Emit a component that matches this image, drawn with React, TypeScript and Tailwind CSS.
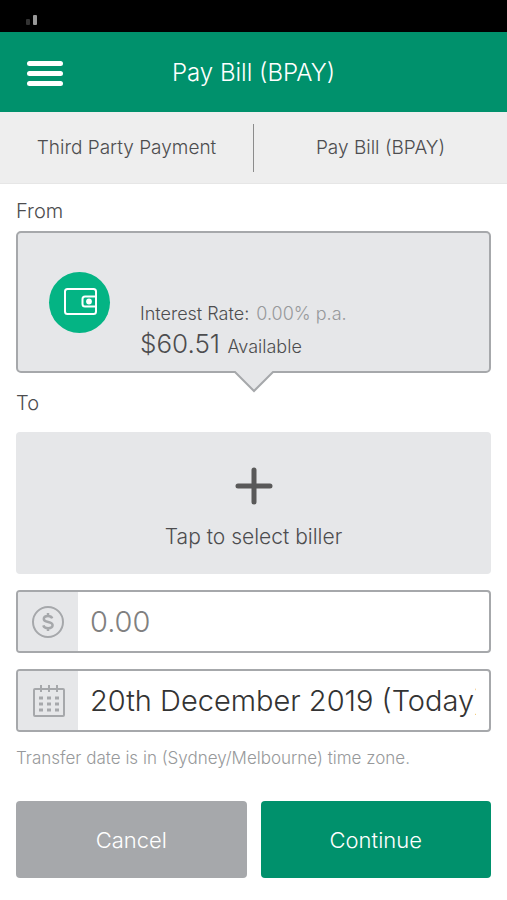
import { useState } from "react";

function WalletIcon() {
  return (
    <svg viewBox="0 0 34 28" className="h-7 w-[34px]" fill="none" stroke="white" strokeWidth="2" aria-hidden="true">
      <rect x="2" y="1" width="31" height="25" rx="2.5" />
      <path d="M33 8.500H22a2.500 2.500 0 0 0-2.500 2.500v5a2.500 2.500 0 0 0 2.500 2.500h11" />
      <circle cx="26" cy="13.500" r="2.900" fill="white" stroke="none" />
    </svg>
  );
}

function DollarIcon() {
  return (
    <svg viewBox="0 0 34 34" className="size-[34px]" fill="none" stroke="#a6a8ab" strokeWidth="2" aria-hidden="true">
      <circle cx="17" cy="17" r="15" />
      <path
        d="M21.200 13.400c-.6-1.700-2.100-2.500-4.200-2.500-2.500 0-4.200 1.200-4.200 3 0 4.300 8.800 1.800 8.800 6.200 0 1.900-1.800 3.200-4.500 3.200-2.400 0-4.200-1-4.800-2.900M17 8v3M17 23v3"
        strokeWidth="2.500"
      />
    </svg>
  );
}

function CalendarIcon() {
  return (
    <svg viewBox="0 0 34 34" className="size-[34px]" fill="none" stroke="#a6a8ab" strokeWidth="2" aria-hidden="true">
      <rect x="3" y="5" width="30" height="27" rx="1" />
      <path d="M10 1v7M18 1v7M26 1v7" />
      <path d="M8 14h4M16 14h4M24 14h4M8 20h4M16 20h4M24 20h4M8 26h4M16 26h4M24 26h4" strokeWidth="3" />
    </svg>
  );
}

function PlusIcon() {
  return (
    <svg viewBox="0 0 38 38" className="size-[38px]" stroke="#595959" strokeWidth="5" strokeLinecap="round" aria-hidden="true">
      <path d="M19 3v32M3 19h32" />
    </svg>
  );
}

export default function App() {
  const [amount, setAmount] = useState("");
  const [date, setDate] = useState("20th December 2019 (Today)");

  return (
    <div className="min-h-screen bg-white font-['Inter','Liberation_Sans',sans-serif] font-light text-[#4d4d4f]">
      <div className="flex h-8 items-center bg-black px-[26px]">
        <div className="flex items-end gap-[3px] pt-2">
          <span className="h-1.5 w-1 rounded-[1px] bg-[#333]" />
          <span className="h-2.5 w-1 rounded-[1px] bg-[#999]" />
        </div>
      </div>

      <header className="grid h-20 grid-cols-[1fr_auto_1fr] items-center bg-[#00916c] px-[27px] pt-0.5">
        <button type="button" aria-label="Menu" className="flex w-9 flex-col gap-[5px]">
          <span className="h-[5px] rounded-full bg-white" />
          <span className="h-[5px] rounded-full bg-white" />
          <span className="h-[5px] rounded-full bg-white" />
        </button>
        <h1 className="text-[24px] leading-8 text-white">Pay Bill (BPAY)</h1>
      </header>

      <nav className="flex h-[72px] items-center border-b border-[#e6e6e6] bg-[#eee] text-[19px] leading-7">
        <button type="button" className="h-12 flex-1 border-r border-[#8c8c8c]">Third Party Payment</button>
        <button type="button" className="h-12 flex-1">Pay Bill (BPAY)</button>
      </nav>

      <main className="px-4 pt-[13px] pb-5">
        <h2 className="text-[20px] leading-7">From</h2>
        <section className="relative mt-1.5 flex h-[142px] items-center rounded-[5px] border-2 border-[#a6a8ab] bg-[#e6e7e9] px-[31px]">
          <div className="flex size-[61px] shrink-0 items-center justify-center rounded-full bg-[#04b484]">
            <WalletIcon />
          </div>
          <div className="ml-[30px] pt-[62px]">
            <p className="text-[18px] leading-6">
              Interest Rate: <span className="ml-0.5 text-[#97999b]">0.00% p.a.</span>
            </p>
            <p className="text-[26px] leading-9">
              $60.51 <span className="text-[18px]">Available</span>
            </p>
          </div>
          <svg viewBox="0 0 42 22" className="absolute top-full left-1/2 h-[22px] w-[42px] -translate-x-1/2" aria-hidden="true">
            <path d="M1 0 21 20 41 0" fill="#e6e7e9" stroke="#a6a8ab" strokeWidth="2" />
          </svg>
        </section>

        <h2 className="mt-4 text-[20px] leading-7">To</h2>
        <button type="button" className="mt-[15px] flex h-[142px] w-full flex-col items-center justify-center gap-[18px] rounded-[4px] bg-[#e6e7e9] pt-3 text-[21px] leading-7">
          <PlusIcon />
          Tap to select biller
        </button>

        <div className="mt-4 flex h-[63px] overflow-hidden rounded-[4px] border-2 border-[#a6a8ab]">
          <label htmlFor="amount" aria-label="Amount" className="flex w-[60px] shrink-0 items-center justify-center bg-[#e6e7e9]">
            <DollarIcon />
          </label>
          <input
            id="amount"
            value={amount}
            onChange={(e) => setAmount(e.target.value)}
            placeholder="0.00"
            className="mr-[13px] min-w-0 flex-1 pl-3 text-[29px] text-[#333] outline-none placeholder:text-[#808080]"
          />
        </div>
        <div className="mt-4 flex h-[63px] overflow-hidden rounded-[4px] border-2 border-[#a6a8ab]">
          <label htmlFor="date" aria-label="Transfer date" className="flex w-[60px] shrink-0 items-center justify-center bg-[#e6e7e9]">
            <CalendarIcon />
          </label>
          <input
            id="date"
            value={date}
            onChange={(e) => setDate(e.target.value)}
            className="mr-[13px] min-w-0 flex-1 pl-3 text-[29px] text-[#333] outline-none"
          />
        </div>

        <p className="mt-[14px] text-[17px] leading-6 text-[#97999b]">Transfer date is in (Sydney/Melbourne) time zone.</p>

        <div className="mt-[31px] grid grid-cols-2 gap-[14px] text-[22px] leading-8 text-white">
          <button type="button" className="h-[77px] rounded-[4px] bg-[#a6a8ab]">Cancel</button>
          <button type="button" className="h-[77px] rounded-[4px] bg-[#00916c]">Continue</button>
        </div>
      </main>
    </div>
  );
}
